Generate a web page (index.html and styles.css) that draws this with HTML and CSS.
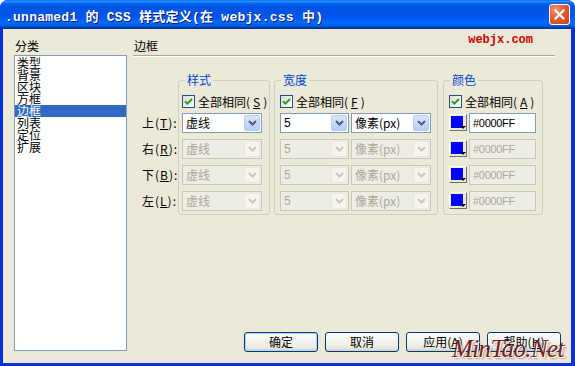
FILE: index.html
```html
<!DOCTYPE html>
<html>
<head>
<meta charset="utf-8">
<link rel="stylesheet" href="styles.css">
</head>
<body>
<div class="window">
  <div class="titlebar">
    <span class="title">.unnamed1 的 CSS 样式定义(在 webjx.css 中)</span>
    <span class="close"><svg width="11" height="11" viewBox="0 0 11 11"><path d="M1.5 1.5 L9.5 9.5 M9.5 1.5 L1.5 9.5" stroke="#fff" stroke-width="2.2" stroke-linecap="square" fill="none"/></svg></span>
  </div>
  <div class="client">
    <div class="left">
      <div class="cap">分类</div>
      <ul class="list">
        <li>类型</li>
        <li>背景</li>
        <li>区块</li>
        <li>方框</li>
        <li class="sel">边框</li>
        <li>列表</li>
        <li>定位</li>
        <li>扩展</li>
      </ul>
    </div>
    <div class="right">
      <div class="head"><span class="ttl">边框</span><span class="brand">webjx.com</span></div>
      <div class="sep"></div>
      <div class="groups">
        <div class="labels">
          <div>上(<u>T</u>):</div>
          <div>右(<u>R</u>):</div>
          <div>下(<u>B</u>):</div>
          <div>左(<u>L</u>):</div>
        </div>
        <fieldset class="grp g1">
          <legend>样式</legend>
          <div class="inner">
            <div class="chk"><span class="box"><svg width="9" height="9" viewBox="0 0 9 9"><path d="M1 4.2 L3.4 6.6 L8 2" stroke="#21A121" stroke-width="2" fill="none"/></svg></span>全部相同(<u>S</u>)</div>
            <div class="rows">
              <div class="row"><div class="combo w80"><span class="val">虚线</span><span class="dd"><svg width="9" height="6" viewBox="0 0 9 6"><path d="M1 1 L4.5 4.5 L8 1" fill="none" stroke-width="2"/></svg></span></div></div>
              <div class="row"><div class="combo w80 dis"><span class="val">虚线</span><span class="dd"><svg width="9" height="6" viewBox="0 0 9 6"><path d="M1 1 L4.5 4.5 L8 1" fill="none" stroke-width="2"/></svg></span></div></div>
              <div class="row"><div class="combo w80 dis"><span class="val">虚线</span><span class="dd"><svg width="9" height="6" viewBox="0 0 9 6"><path d="M1 1 L4.5 4.5 L8 1" fill="none" stroke-width="2"/></svg></span></div></div>
              <div class="row"><div class="combo w80 dis"><span class="val">虚线</span><span class="dd"><svg width="9" height="6" viewBox="0 0 9 6"><path d="M1 1 L4.5 4.5 L8 1" fill="none" stroke-width="2"/></svg></span></div></div>
            </div>
          </div>
        </fieldset>
        <fieldset class="grp g2">
          <legend>宽度</legend>
          <div class="inner">
            <div class="chk"><span class="box"><svg width="9" height="9" viewBox="0 0 9 9"><path d="M1 4.2 L3.4 6.6 L8 2" stroke="#21A121" stroke-width="2" fill="none"/></svg></span>全部相同(<u>F</u>)</div>
            <div class="rows">
              <div class="row">
                <div class="combo w69"><span class="val num">5</span><span class="dd"><svg width="9" height="6" viewBox="0 0 9 6"><path d="M1 1 L4.5 4.5 L8 1" fill="none" stroke-width="2"/></svg></span></div>
                <div class="combo w80"><span class="val">像素(px)</span><span class="dd"><svg width="9" height="6" viewBox="0 0 9 6"><path d="M1 1 L4.5 4.5 L8 1" fill="none" stroke-width="2"/></svg></span></div>
              </div>
              <div class="row">
                <div class="combo w69 dis"><span class="val num">5</span><span class="dd"><svg width="9" height="6" viewBox="0 0 9 6"><path d="M1 1 L4.5 4.5 L8 1" fill="none" stroke-width="2"/></svg></span></div>
                <div class="combo w80 dis"><span class="val">像素(px)</span><span class="dd"><svg width="9" height="6" viewBox="0 0 9 6"><path d="M1 1 L4.5 4.5 L8 1" fill="none" stroke-width="2"/></svg></span></div>
              </div>
              <div class="row">
                <div class="combo w69 dis"><span class="val num">5</span><span class="dd"><svg width="9" height="6" viewBox="0 0 9 6"><path d="M1 1 L4.5 4.5 L8 1" fill="none" stroke-width="2"/></svg></span></div>
                <div class="combo w80 dis"><span class="val">像素(px)</span><span class="dd"><svg width="9" height="6" viewBox="0 0 9 6"><path d="M1 1 L4.5 4.5 L8 1" fill="none" stroke-width="2"/></svg></span></div>
              </div>
              <div class="row">
                <div class="combo w69 dis"><span class="val num">5</span><span class="dd"><svg width="9" height="6" viewBox="0 0 9 6"><path d="M1 1 L4.5 4.5 L8 1" fill="none" stroke-width="2"/></svg></span></div>
                <div class="combo w80 dis"><span class="val">像素(px)</span><span class="dd"><svg width="9" height="6" viewBox="0 0 9 6"><path d="M1 1 L4.5 4.5 L8 1" fill="none" stroke-width="2"/></svg></span></div>
              </div>
            </div>
          </div>
        </fieldset>
        <fieldset class="grp g3">
          <legend>颜色</legend>
          <div class="inner">
            <div class="chk"><span class="box"><svg width="9" height="9" viewBox="0 0 9 9"><path d="M1 4.2 L3.4 6.6 L8 2" stroke="#21A121" stroke-width="2" fill="none"/></svg></span>全部相同(<u>A</u>)</div>
            <div class="rows">
              <div class="row"><span class="sw"></span><div class="inp">#0000FF</div></div>
              <div class="row"><span class="sw"></span><div class="inp dis">#0000FF</div></div>
              <div class="row"><span class="sw"></span><div class="inp dis">#0000FF</div></div>
              <div class="row"><span class="sw"></span><div class="inp dis">#0000FF</div></div>
            </div>
          </div>
        </fieldset>
      </div>
      <div class="buttons">
        <div class="btn def">确定</div>
        <div class="btn">取消</div>
        <div class="btn">应用(<u>A</u>)</div>
        <div class="btn">帮助(<u>H</u>)</div>
      </div>
    </div>
  </div>
  <div class="mark">MinTao.Net</div>
</div>
</body>
</html>
```
FILE: styles.css
```css
html, body {
  margin: 0;
  padding: 0;
}
body {
  width: 575px;
  height: 366px;
  background: #ffffff;
  font-family: "Noto Sans CJK SC", "Liberation Sans", sans-serif;
  font-size: 12px;
  color: #000;
  overflow: hidden;
}
.window {
  position: relative;
  width: 575px;
  height: 366px;
  background: #0831D9;
  border-radius: 8px 8px 0 0;
  display: flex;
  flex-direction: column;
  overflow: hidden;
}
.titlebar {
  flex: none;
  height: 29px;
  box-sizing: border-box;
  padding: 2px 5px 0 5px;
  display: flex;
  align-items: center;
  background: linear-gradient(to bottom, #0058EE 0%, #3593FF 4%, #288EFF 6%, #127DFF 8%, #036FFC 10%, #0262EE 14%, #0057E5 20%, #0054E3 24%, #0055EB 56%, #005BF5 66%, #026AFE 76%, #0062EF 86%, #0052D6 92%, #0040AB 94%, #003092 100%);
}
.title {
  flex: 1;
  color: #fff;
  font: bold 13px "Liberation Mono", "Noto Sans CJK SC", monospace;
  letter-spacing: 0.25px;
  white-space: pre;
  text-shadow: 1px 1px 0 #0A1883;
}
.close {
  width: 21px;
  height: 21px;
  box-sizing: border-box;
  border: 1px solid #fff;
  border-radius: 3px;
  background: radial-gradient(circle at 30% 25%, #F39373 0%, #E25D35 45%, #C8401A 100%);
  display: flex;
  align-items: center;
  justify-content: center;
  margin-bottom: 2px;
}
.client {
  flex: 1;
  margin: 0 4px 3px 3px;
  background: #ECE9D8;
  display: flex;
  padding: 11px 9px 11px 11px;
}
.left {
  width: 113px;
  display: flex;
  flex-direction: column;
}
.cap {
  height: 12px;
  line-height: 12px;
  margin-bottom: 3px;
  padding-left: 1px;
}
.list {
  height: 296px;
  box-sizing: border-box;
  margin: 0;
  padding: 1px 0 0 0;
  list-style: none;
  border: 1px solid #7F9DB9;
  background: #fff;
}
.list li {
  height: 12px;
  line-height: 12px;
  padding-left: 2px;
}
.list li.sel {
  background: #316AC5;
  color: #fff;
}
.right {
  width: 429px;
  margin-left: 6px;
  display: flex;
  flex-direction: column;
}
.head {
  height: 15px;
  width: 422px;
  display: flex;
  justify-content: space-between;
  align-items: flex-start;
}
.ttl {
  line-height: 12px;
  padding-left: 1px;
}
.brand {
  color: #CC0000;
  font: bold 12px "Liberation Mono", monospace;
  line-height: 12px;
  margin-top: -6px;
  margin-right: 22px;
}
.sep {
  width: 422px;
  border-top: 1px solid #ACA899;
  border-bottom: 1px solid #fff;
}
.groups {
  display: flex;
  align-items: flex-start;
  margin-top: 17px;
}
.labels {
  width: 45px;
  box-sizing: border-box;
  padding: 39px 0 0 9px;
  display: flex;
  flex-direction: column;
  gap: 6px;
}
.labels div {
  height: 20px;
  line-height: 20px;
  white-space: nowrap;
  letter-spacing: 1px;
}
.grp {
  margin: 0;
  padding: 0;
  border: 1px solid #D0D0BF;
  border-radius: 3px;
  box-sizing: border-box;
  min-width: 0;
}
.grp legend {
  margin-left: 6px;
  padding: 0 2px;
  line-height: 12px;
  font-size: 12px;
  color: #0046D5;
}
.g1 { width: 92px; margin-right: 4px; }
.g2 { width: 164px; margin-right: 5px; }
.g3 { width: 100px; }
.inner {
  padding: 6px 0 3px 5px;
}
.g1 .inner { padding-left: 3px; }
.chk {
  height: 18px;
  display: flex;
  align-items: center;
  gap: 3px;
  white-space: nowrap;
  margin-bottom: 3px;
}
.box {
  width: 13px;
  height: 13px;
  box-sizing: border-box;
  border: 1px solid #1C5180;
  background: linear-gradient(135deg, #DCDCD7, #ffffff);
  display: flex;
  align-items: center;
  justify-content: center;
  flex: none;
}
.rows {
  display: flex;
  flex-direction: column;
  gap: 6px;
}
.row {
  display: flex;
  gap: 2px;
  height: 20px;
}
.combo {
  box-sizing: border-box;
  height: 20px;
  border: 1px solid #7F9DB9;
  background: #fff;
  display: flex;
  padding: 1px;
  white-space: nowrap;
}
.w80 { width: 80px; }
.w69 { width: 69px; }
.val {
  flex: 1;
  line-height: 16px;
  padding-left: 2px;
  overflow: hidden;
}
.val.num {
  font-family: "Liberation Sans", sans-serif;
}
.dd {
  width: 16px;
  box-sizing: border-box;
  border: 1px solid #B9CDF6;
  border-radius: 2px;
  background: linear-gradient(#DCE6FD, #B7CBF8);
  display: flex;
  align-items: center;
  justify-content: center;
}
.dd path { stroke: #4D6185; }
.combo.dis {
  border-color: #C9C7BA;
  background: #EEEDE5;
  color: #ACA899;
}
.combo.dis .dd {
  border-color: #E9E7DE;
  background: #F5F4EF;
}
.combo.dis .dd path { stroke: #C9C7BA; }
.sw {
  position: relative;
  width: 18px;
  height: 17px;
  box-sizing: border-box;
  margin-top: 1px;
  border: 1px solid;
  border-color: #fff #716F64 #716F64 #fff;
  background: #ECE9D8;
  flex: none;
}
.sw::before {
  content: "";
  position: absolute;
  left: 1px;
  top: 1px;
  width: 12px;
  height: 12px;
  background: #0000FF;
}
.sw::after {
  content: "";
  position: absolute;
  right: 0px;
  bottom: 1px;
  border-top: 3px solid #000;
  border-left: 3px solid transparent;
  border-right: 3px solid transparent;
}
.inp {
  width: 67px;
  height: 20px;
  box-sizing: border-box;
  border: 1px solid #7F9DB9;
  background: #fff;
  font: 11px "Liberation Sans", sans-serif;
  line-height: 18px;
  padding-left: 3px;
  letter-spacing: -0.3px;
}
.inp.dis {
  border-color: #C9C7BA;
  background: #EEEDE5;
  color: #ACA899;
}
.buttons {
  margin-top: auto;
  display: flex;
  justify-content: flex-end;
  gap: 7px;
  padding-right: 1px;
}
.btn {
  width: 74px;
  height: 20px;
  box-sizing: border-box;
  border: 1px solid #003C74;
  border-radius: 3px;
  background: linear-gradient(#FFFFFF 0%, #F4F4F0 40%, #ECEBE6 80%, #D6D0C5 100%);
  display: flex;
  align-items: center;
  justify-content: center;
  line-height: 12px;
  white-space: nowrap;
}
.btn.def {
  box-shadow: inset 0 0 0 1px #B9D1FA;
}
.mark {
  position: absolute;
  left: 452px;
  top: 336px;
  font: italic 25px "Liberation Serif", serif;
  line-height: 25px;
  letter-spacing: -0.6px;
  color: #7A1F1F;
  text-shadow: 1px 1px 0 #fff, 2px 2px 2px rgba(0, 0, 0, 0.35);
  white-space: nowrap;
}
```
